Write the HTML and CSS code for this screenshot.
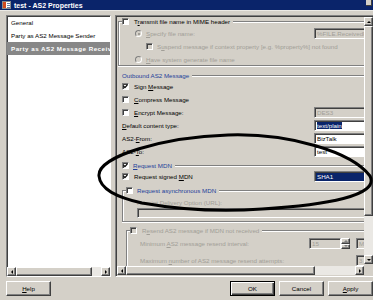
FILE: index.html
```html
<!doctype html>
<html lang="en">
<head>
    <meta charset="utf-8">
    <meta name="viewport" content="width=device-width, initial-scale=1">
    <title>test - AS2 Properties</title>

    <link rel="stylesheet" href="styles.css">

</head>
<body>
<div class="titlebar">
    <svg class="title-icon" width="9" height="8" viewBox="0 0 9 8">
        <rect x="0.5" y="0.5" width="8" height="7" fill="#fff" stroke="#8a8a8a"/>
        <rect x="1" y="1" width="3" height="6" fill="#d24a1e"/>
        <path d="M5 2.5h3M5 4.5h3M5 6.5h3" stroke="#6b7fa8"/>
    </svg>
    <span class="title-text">test - AS2 Properties</span>
    <span class="title-close"></span>
</div>

<div class="main">
    <div class="listbox">
        <div class="list-items">
            <div class="item">General</div>
            <div class="item">Party as AS2 Message Sender</div>
            <div class="item selected">Party as AS2 Message Receiver</div>
        </div>
        <div class="hscroll">
            <span class="arrow left"></span>
            <span class="thumb thumb-list"></span>
            <span class="track"></span>
            <span class="arrow right"></span>
        </div>
    </div>

    <div class="panel">
        <div class="content">
            <!-- file name group -->
            <div class="group transmit">
                <div class="ghead framed">
                    <span class="cb"></span>
                    <span class="label">T<u>r</u>ansmit file name in MIME header</span>
                </div>
                <div class="gbody closed">
                    <div class="row ind-radio">
                        <span class="rb on disabled"></span>
                        <span class="label dim"><u>S</u>pecify file name:</span>
                        <span class="tbox disabled">%FILE.ReceivedFileName%</span>
                    </div>
                    <div class="row ind-check">
                        <span class="cb disabled"></span>
                        <span class="label dim">S<u>u</u>spend message if context property [e.g. %property%] not found</span>
                    </div>
                    <div class="row ind-radio short">
                        <span class="rb disabled"></span>
                        <span class="label dim"><u>H</u>ave system generate file name</span>
                    </div>
                </div>
            </div>

            <!-- outbound message -->
            <div class="ghead outbound">
                <span class="label blue">Outbound AS2 Message</span>
            </div>
            <div class="rows-outbound">
                <div class="row">
                    <span class="cb"><svg class="tick" width="5" height="5" viewBox="0 0 5 5"><path d="M0.6 2.2 L1.9 3.6 L4.4 0.9"/></svg></span>
                    <span class="label">Sign <u>M</u>essage</span>
                </div>
                <div class="row">
                    <span class="cb"></span>
                    <span class="label"><u>C</u>ompress Message</span>
                </div>
                <div class="row">
                    <span class="cb"></span>
                    <span class="label"><u>E</u>ncrypt Message:</span>
                    <span class="tbox disabled">DES3</span>
                </div>
                <div class="row">
                    <span class="label plain"><u>D</u>efault content type:</span>
                    <span class="tbox"><span class="sel">text/plain</span></span>
                </div>
                <div class="row">
                    <span class="label plain">AS2-<u>F</u>rom:</span>
                    <span class="tbox">BizTalk</span>
                </div>
                <div class="row">
                    <span class="label plain">AS2-<u>T</u>o:</span>
                    <span class="tbox">test</span>
                </div>
            </div>

            <!-- MDN -->
            <div class="ghead mdn">
                <span class="cb"><svg class="tick" width="5" height="5" viewBox="0 0 5 5"><path d="M0.6 2.2 L1.9 3.6 L4.4 0.9"/></svg></span>
                <span class="label blue"><u>R</u>equest MDN</span>
            </div>
            <div class="row signed">
                <span class="cb"><svg class="tick" width="5" height="5" viewBox="0 0 5 5"><path d="M0.6 2.2 L1.9 3.6 L4.4 0.9"/></svg></span>
                <span class="label">Request signed <u>M</u>DN</span>
                <span class="tbox focus">SHA1</span>
            </div>

            <div class="group async">
                <div class="ghead framed">
                    <span class="cb"></span>
                    <span class="label blue">Request asynchronous MDN</span>
                </div>
                <div class="gbody closed">
                    <div class="row small">
                        <span class="label dim">Receipt Delivery Option (URL):</span>
                    </div>
                    <div class="row url">
                        <span class="tbox disabled wide"></span>
                    </div>
                </div>
            </div>

            <!-- resend -->
            <div class="group resend">
                <div class="ghead framed">
                    <span class="cb disabled"></span>
                    <span class="label dim">R<u>e</u>send AS2 message if MDN not received</span>
                </div>
                <div class="gbody">
                    <div class="row">
                        <span class="label dim">Minimum <u>A</u>S2 message resend interval:</span>
                        <span class="spin">
                            <span class="tbox disabled">15</span>
                            <span class="spin-btns">
                                <span class="arrow up dimmed"></span>
                                <span class="arrow down dimmed"></span>
                            </span>
                        </span>
                        <span class="tbox disabled stub">M</span>
                    </div>
                    <div class="row max">
                        <span class="label dim">Maximum <u>n</u>umber of AS2 message resend attempts:</span>
                        <span class="tbox disabled stub">3</span>
                    </div>
                </div>
            </div>
        </div>

        <div class="vscroll">
            <span class="arrow up"></span>
            <span class="thumb thumb-v"></span>
            <span class="track"></span>
            <span class="arrow down"></span>
        </div>
        <div class="hscroll">
            <span class="arrow left"></span>
            <span class="thumb thumb-panel"></span>
            <span class="track"></span>
            <span class="arrow right"></span>
        </div>
        <div class="corner"></div>
    </div>
</div>

<div class="buttons">
    <span class="btn"><span><u>H</u>elp</span></span>
    <div class="btn-group">
        <span class="btn default">OK</span>
        <span class="btn">Cancel</span>
        <span class="btn"><span><u>A</u>pply</span></span>
    </div>
</div>

<svg class="scribble" width="373" height="300" viewBox="0 0 373 300">
    <path d="M 99 176 C 97 156, 165 137, 228 135 C 290 133, 352 152, 370 176 C 380 196, 325 205, 262 209 C 222 212, 182 210, 142 203 C 116 197, 100 189, 99 176" fill="none" stroke="#000" stroke-width="3" stroke-linecap="round"/>
</svg>
</body>
</html>
```

FILE: styles.css
```css
body {
    margin: 0;
    width: 373px;
    height: 300px;
    overflow: hidden;
    position: relative;
    background: #d4d0c8;
    font-family: "Liberation Sans", Arial, sans-serif;
    font-size: 6.2px;
    color: #000;
}

u {
    text-decoration-thickness: 1px;
}

/* title bar */
.titlebar {
    height: 10px;
    background: #0a246a;
    border-bottom: 1px solid #ebe9e4;
    display: flex;
    align-items: center;
    color: #fff;
    font-weight: bold;
    font-size: 7px;
}

.title-icon {
    margin-left: 2px;
}

.title-text {
    margin-left: 3px;
}

.title-close {
    margin-left: auto;
    margin-right: 1px;
    align-self: flex-start;
    width: 5px;
    height: 5px;
    background: #d4d0c8;
    border-right: 1px solid #404040;
    border-bottom: 1px solid #404040;
}

.main {
    display: flex;
    padding: 4px 0 0 6px;
}

/* left list */
.listbox {
    width: 105px;
    height: 262px;
    box-sizing: border-box;
    border: 1px solid;
    border-color: #808080 #fff #fff #808080;
    box-shadow: inset 1px 1px #404040;
    background: #fff;
    display: flex;
    flex-direction: column;
}

.list-items {
    flex: 1;
}

.item {
    height: 13px;
    line-height: 13px;
    padding-left: 4px;
    white-space: nowrap;
    overflow: hidden;
}

.item.selected {
    background: #878787;
    color: #fff;
    font-weight: bold;
    letter-spacing: 0.5px;
}

/* scroll bars */
.hscroll {
    display: flex;
    height: 9px;
}

.vscroll {
    display: flex;
    flex-direction: column;
    padding-bottom: 2px;
}

.arrow {
    width: 9px;
    height: 9px;
    flex: none;
    box-sizing: border-box;
    background: #d4d0c8;
    border: 1px solid;
    border-color: #fff #404040 #404040 #fff;
    box-shadow: inset -1px -1px #808080;
    display: flex;
    align-items: center;
    justify-content: center;
}

.arrow::after {
    content: "";
    width: 0;
    height: 0;
    border: 2px solid transparent;
}

.arrow.left::after {
    border-right-color: #000;
    border-left-width: 0;
}

.arrow.right::after {
    border-left-color: #000;
    border-right-width: 0;
}

.arrow.up::after {
    border-bottom-color: #000;
    border-top-width: 0;
}

.arrow.down::after {
    border-top-color: #000;
    border-bottom-width: 0;
}

.thumb {
    flex: none;
    box-sizing: border-box;
    background: #d4d0c8;
    border: 1px solid;
    border-color: #fff #404040 #404040 #fff;
    box-shadow: inset -1px -1px #808080;
}

.thumb-list {
    width: 76px;
}

.thumb-panel {
    width: 189px;
}

.thumb-v {
    height: 190px;
}

.track {
    flex: 1;
    background: #eae8e4;
}

.corner {
    background: #d4d0c8;
}

/* right panel */
.panel {
    margin-left: 4px;
    width: 260px;
    height: 262px;
    box-sizing: border-box;
    border: 1px solid;
    border-color: #808080 #fff #fff #808080;
    padding: 1px;
    box-shadow: inset 1px 1px #404040;
    display: grid;
    grid-template-columns: 247px 9px;
    grid-template-rows: 249px 9px;
}

.content {
    overflow: hidden;
}

.row {
    display: flex;
    align-items: center;
    height: 13px;
    white-space: nowrap;
}

.label {
    margin-left: 5px;
}

.label.plain {
    margin-left: 0;
}

.blue {
    color: #23409a;
}

.dim {
    color: #a19e97;
}

/* check boxes and radios */
.cb {
    width: 7px;
    height: 7px;
    flex: none;
    box-sizing: border-box;
    background: #fff;
    border: 1px solid;
    border-color: #808080 #fff #fff #808080;
    box-shadow: inset 1px 1px #404040;
    display: flex;
    align-items: center;
    justify-content: center;
}

.cb.disabled {
    background: #d4d0c8;
}

.tick path {
    fill: none;
    stroke: #000;
    stroke-width: 1.2;
}

.rb {
    width: 7px;
    height: 7px;
    flex: none;
    box-sizing: border-box;
    border-radius: 50%;
    border: 1px solid;
    border-color: #808080 #fff #fff #808080;
    background: #fff;
    display: flex;
    align-items: center;
    justify-content: center;
}

.rb.disabled {
    background: #d4d0c8;
}

.rb.on::after {
    content: "";
    width: 2px;
    height: 2px;
    border-radius: 50%;
    background: #8e8b85;
}

.rb + .label {
    margin-left: 4px;
}

/* text boxes */
.tbox {
    margin-left: auto;
    margin-right: -2px;
    width: 52px;
    height: 11px;
    flex: none;
    box-sizing: border-box;
    padding-left: 2px;
    border: 1px solid;
    border-color: #808080 #fff #fff #808080;
    box-shadow: inset 1px 1px #404040;
    background: #fff;
    display: flex;
    align-items: center;
    overflow: hidden;
    white-space: nowrap;
}

.tbox.disabled {
    background: #d4d0c8;
    color: #a19e97;
}

.tbox.focus {
    background: #0a246a;
    color: #fff;
}

.sel {
    background: #0a246a;
    color: #fff;
}

/* group boxes */
.ghead {
    display: flex;
    align-items: center;
    height: 8px;
    white-space: nowrap;
}

.ghead::after {
    content: "";
    flex: 1;
    align-self: flex-start;
    margin-top: 4px;
    margin-left: 3px;
    border-top: 1px solid #808080;
    border-bottom: 1px solid #fff;
}

.ghead.framed::before {
    content: "";
    align-self: stretch;
    margin-top: 4px;
    width: 3px;
    border-top: 1px solid #808080;
    border-left: 1px solid #808080;
    box-shadow: inset 1px 1px #fff;
}

.gbody {
    border-left: 1px solid #808080;
    box-shadow: inset 1px 0 #fff;
}

.gbody.closed {
    border-bottom: 1px solid #808080;
    box-shadow: inset 1px 0 #fff, 0 1px #fff;
}

.transmit {
    margin-left: 1px;
}

.transmit .gbody {
    padding-top: 2px;
}

.ind-radio {
    padding-left: 16px;
}

.ind-radio.short {
    height: 12px;
}

.ind-check {
    padding-left: 27px;
}

.ind-check .label {
    margin-left: 4px;
}

.outbound {
    margin-top: 5px;
    padding-left: 5px;
}

.outbound .label {
    margin-left: 0;
}

.rows-outbound {
    margin-top: 1px;
    padding-left: 5px;
}

.mdn {
    margin-top: 3px;
    padding-left: 5px;
}

.mdn .label {
    margin-left: 4px;
}

.signed {
    margin-top: 1px;
    padding-left: 5px;
}

.async {
    margin-left: 5px;
    margin-top: 3px;
}

.async .ghead .label {
    margin-left: 4px;
}

.async .gbody {
    padding: 3px 0 3px 14px;
}

.async .label {
    margin-left: 0;
}

.row.small {
    height: 11px;
}

.row.url {
    height: 10px;
}

.tbox.wide {
    flex: 1;
    width: auto;
    height: 10px;
}

.resend {
    margin-left: 9px;
    margin-top: 4px;
}

.resend .gbody {
    padding: 3px 0 0 13px;
}

.resend .gbody .label {
    margin-left: 0;
}

.spin {
    margin-left: auto;
    width: 41px;
    height: 11px;
    display: flex;
}

.spin .tbox {
    margin: 0;
    flex: 1;
    width: auto;
}

.spin-btns {
    display: flex;
    flex-direction: column;
}

.spin-btns .arrow {
    height: 5.5px;
}

.arrow.dimmed.up::after {
    border-bottom-color: #808080;
}

.arrow.dimmed.down::after {
    border-top-color: #808080;
}

.tbox.stub {
    margin-left: 6px;
    width: 10px;
}

.row.max {
    margin-top: 4px;
}

.row.max .tbox.stub {
    margin-left: auto;
}

/* dialog buttons */
.buttons {
    display: flex;
    padding: 4px 0 0 6px;
}

.btn-group {
    margin-left: auto;
    display: flex;
    gap: 4px;
}

.btn {
    width: 45px;
    height: 15px;
    box-sizing: border-box;
    border: 1px solid;
    border-color: #fff #404040 #404040 #fff;
    box-shadow: inset -1px -1px #808080;
    display: flex;
    align-items: center;
    justify-content: center;
}

.btn.default {
    border-color: #000;
    box-shadow: inset 1px 1px #fff, inset -1px -1px #404040, inset -2px -2px #808080;
}

.scribble {
    position: absolute;
    left: 0;
    top: 0;
    pointer-events: none;
}
```
